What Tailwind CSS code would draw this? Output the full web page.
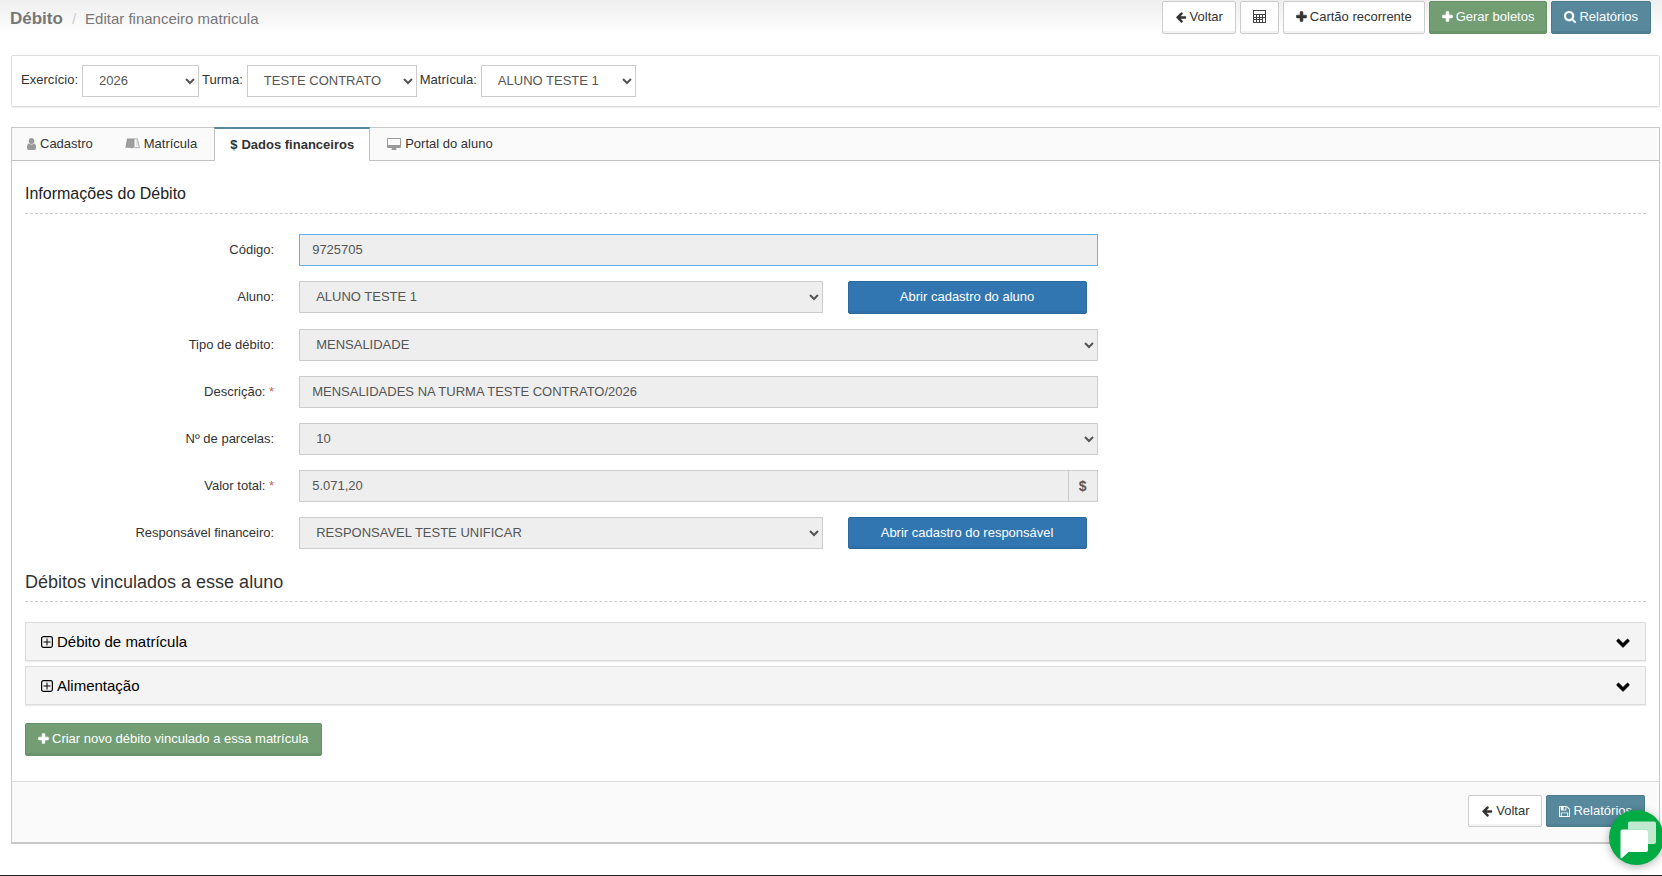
<!DOCTYPE html>
<html lang="pt-BR">
<head>
    <meta charset="UTF-8">
    <meta name="viewport" content="width=device-width, initial-scale=1.0">
    <title>Débito - Editar financeiro matricula</title>
    <script src="https://cdn.jsdelivr.net/npm/@tailwindcss/browser@4"></script>
</head>
<body class="bg-white font-['Liberation_Sans',Arial,sans-serif] text-[13px] leading-5 text-[#333]">

    <!-- Shared icons -->
    <svg class="hidden" xmlns="http://www.w3.org/2000/svg">
        <symbol id="i-left" viewBox="0 0 1792 1792"><path d="M1664 896v128q0 53-32.500 90.500t-84.500 37.500h-704l293 294q38 36 38 90t-38 90l-75 76q-37 37-90 37-52 0-91-37l-651-652q-37-37-37-90 0-52 37-91l651-650q38-38 91-38 52 0 90 38l75 74q38 38 38 91t-38 91l-293 293h704q52 0 84.500 37.500t32.500 90.500z"/></symbol>
        <symbol id="i-plus" viewBox="128 64 1536 1536"><path d="M1600 736v192q0 40-28 68t-68 28h-416v416q0 40-28 68t-68 28h-192q-40 0-68-28t-28-68v-416h-416q-40 0-68-28t-28-68v-192q0-40 28-68t68-28h416v-416q0-40 28-68t68-28h192q40 0 68 28t28 68v416h416q40 0 68 28t28 68z" stroke="currentColor" stroke-width="90"/></symbol>
        <symbol id="i-search" viewBox="64 128 1664 1664"><path d="M1216 832q0-185-131.500-316.500t-316.500-131.500-316.500 131.500-131.500 316.500 131.500 316.500 316.500 131.500 316.500-131.500 131.500-316.500zm512 832q0 52-38 90t-90 38q-54 0-90-38l-343-342q-179 124-399 124-143 0-273.500-55.500t-225-150-150-225-55.500-273.500 55.500-273.500 150-225 225-150 273.500-55.500 273.500 55.500 225 150 150 225 55.500 273.500q0 220-124 399l343 343q37 37 37 90z" stroke="currentColor" stroke-width="50"/></symbol>
        <symbol id="i-save" viewBox="128 128 1536 1536"><path d="M512 1536h768v-384h-768v384zm896 0h128v-896q0-14-10-38.500t-20-34.500l-281-281q-10-10-34-20t-39-10v416q0 40-28 68t-68 28h-576q-40 0-68-28t-28-68v-416h-128v1280h128v-416q0-40 28-68t68-28h832q40 0 68 28t28 68v416zm-384-928v-320q0-13-9.500-22.500t-22.500-9.500h-192q-13 0-22.500 9.500t-9.500 22.500v320q0 13 9.500 22.500t22.500 9.500h192q13 0 22.500-9.500t9.500-22.500zm640 32v928q0 40-28 68t-68 28h-1344q-40 0-68-28t-28-68v-1344q0-40 28-68t68-28h928q40 0 88 20t76 48l280 280q28 28 48 76t20 88z"/></symbol>
        <symbol id="i-down" viewBox="0 0 1792 1792"><path d="M1683 808l-742 741q-19 19-45 19t-45-19l-742-741q-19-19-19-45.500t19-45.500l166-165q19-19 45-19t45 19l531 531 531-531q19-19 45-19t45 19l166 165q19 19 19 45.500t-19 45.500z" stroke="currentColor" stroke-width="110"/></symbol>
        <symbol id="i-plus-square" viewBox="0 0 12 12"><rect x=".6" y=".6" width="10.800" height="10.800" rx="1.800" fill="none" stroke="currentColor" stroke-width="1.200"/><path d="M2.500 5.500h3v-3h1v3h3v1h-3v3h-1v-3h-3z"/></symbol>
    </svg>

    <!-- Page title and actions -->
    <header class="flex items-start justify-between bg-linear-to-b from-[#eee] to-white to-60% pt-px pr-[11px] pl-[10px] h-[55px]">
        <h1 class="flex items-center gap-[9px] text-[15px] leading-9 text-[#777]">
            <span class="text-[17px] font-bold">Débito</span>
            <span class="text-[#ccc]">/</span>
            <span>Editar financeiro matricula</span>
        </h1>
        <div class="flex gap-1">
            <button type="button" class="flex h-[33px] items-center gap-[3px] rounded-xs border border-[#ccc] bg-white px-3 pb-[2px] shadow-[inset_0_-2px_0_rgba(0,0,0,0.05)]">
                <svg class="size-3 fill-current"><use href="#i-left"/></svg>Voltar
            </button>
            <button type="button" aria-label="Calculadora" class="flex h-[33px] items-center rounded-xs border border-[#ccc] bg-white px-3 pb-[2px] shadow-[inset_0_-2px_0_rgba(0,0,0,0.05)]">
                <svg class="h-[13px] w-[13px]" viewBox="0 0 13 13">
                    <path d="M0 0h13v13H0z" fill="#444"/>
                    <path d="M1 1h11v3H1zM1 5h2v2H1zm3 0h2v2H4zm3 0h2v2H7zm3 0h2v2h-2zM1 8h2v1H1zm3 0h2v1H4zm3 0h2v1H7zM1 10h2v2H1zm3 0h2v2H4zm3 0h2v2H7zm3-2h2v4h-2z" fill="#fff"/>
                </svg>
            </button>
            <button type="button" class="flex h-[33px] items-center gap-[3px] rounded-xs border border-[#ccc] bg-white px-3 pb-[2px] shadow-[inset_0_-2px_0_rgba(0,0,0,0.05)]">
                <svg class="size-[11px] fill-current"><use href="#i-plus"/></svg>Cartão recorrente
            </button>
            <button type="button" class="flex h-[33px] items-center gap-[3px] rounded-xs border border-[#659265] bg-[#739e73] px-3 pb-[2px] text-white shadow-[inset_0_-2px_0_rgba(0,0,0,0.05)]">
                <svg class="size-[11px] fill-current"><use href="#i-plus"/></svg>Gerar boletos
            </button>
            <button type="button" class="flex h-[33px] items-center gap-[3px] rounded-xs border border-[#4c7a8d] bg-[#57889c] px-3 pb-[2px] text-white shadow-[inset_0_-2px_0_rgba(0,0,0,0.05)]">
                <svg class="size-3 fill-current"><use href="#i-search"/></svg>Relatórios
            </button>
        </div>
    </header>

    <main class="mr-[2px] ml-[11px]">
        <!-- Filters -->
        <form class="flex items-start gap-1 rounded-xs border border-[#ddd] px-[9px] pt-[9px] pb-[9px] shadow-[0_1px_1px_#ececec]">
            <label for="exercicio" class="leading-[30px]">Exercício:</label>
            <select id="exercicio" class="h-8 w-[117px] border border-[#ccc] bg-white px-3 pb-[2px] text-[#555]"><option>2026</option></select>
            <label for="turma" class="-ml-px leading-[30px]">Turma:</label>
            <select id="turma" class="h-8 w-[170px] border border-[#ccc] bg-white px-3 pb-[2px] text-[#555]"><option>TESTE CONTRATO</option></select>
            <label for="matricula" class="-ml-px leading-[30px]">Matrícula:</label>
            <select id="matricula" class="h-8 w-[155px] border border-[#ccc] bg-white px-3 pb-[2px] text-[#555]"><option>ALUNO TESTE 1</option></select>
        </form>

        <section class="mt-5 border border-b-2 border-[#c8c8c8]">
            <!-- Tabs -->
            <nav class="flex h-[33px] items-stretch border-b border-[#c2c2c2] bg-[#fafafa]">
                <a href="#cadastro" class="flex items-center gap-1 px-[15px] pb-px">
                    <svg class="h-3 w-[9px]" viewBox="0 0 9 12" fill="#999"><path d="M4.500 0C6.200 0 7.300 1.300 7.300 3S6.200 6 4.500 6 1.700 4.700 1.700 3 2.800 0 4.500 0zM1.800 5.600Q4.500 7.400 7.200 5.600 9 6 9 9.500 9 12 7.200 12H1.800Q0 12 0 9.500 0 6 1.800 5.600z"/></svg>
                    Cadastro
                </a>
                <a href="#matricula" class="flex items-center gap-1 px-[17px] pb-px">
                    <svg class="h-[11px] w-[15px]" viewBox="0 0 15 11"><path d="M2 .5h7.500v9.200H8L6.800 10.500 5.500 9.700H.3L.8 8z" fill="#999"/><path d="M9.500.8h2.800L14.500 9.700H10" fill="none" stroke="#aaa"/><path d="M4.300 2 3.500 8.500M6.800 2v6.500" stroke="#bbb" stroke-width=".5"/><path d="M12 2v6.500" stroke="#ccc"/></svg>
                    Matrícula
                </a>
                <a href="#financeiro" class="-mt-px -mb-px flex items-center gap-1 border-x border-t-2 border-x-[#c2c2c2] border-t-[#57889c] bg-white px-[15px] font-bold">
                    <span>$</span>Dados financeiros
                </a>
                <a href="#portal" class="flex items-center gap-1 px-[17px] pb-px">
                    <svg class="h-3 w-[14px]" viewBox="0 0 14 12" fill="#999"><path fill-rule="evenodd" d="M1 0h12q1 0 1 1v8q0 1-1 1H9l.5 1.300V12h-5v-.7L5 10H1q-1 0-1-1V1q0-1 1-1zm0 1v6h12V1z"/></svg>
                    Portal do aluno
                </a>
            </nav>

            <div class="px-[13px] pt-4 pb-[25px]">
                <h2 class="border-b border-dashed border-[#ccc] pb-[2px] text-[16px] leading-[34px] text-[#222]">Informações do Débito</h2>

                <!-- Debt data -->
                <form class="mt-5 flex flex-col gap-[15px]">
                    <div class="grid grid-cols-12 gap-x-6">
                        <label for="codigo" class="col-span-2 pr-px text-right leading-[31px]">Código:</label>
                        <input id="codigo" type="text" value="9725705" readonly class="col-span-6 h-8 border border-[#66afe9] bg-[#eee] px-3 pb-[2px] text-[#555]">
                    </div>
                    <div class="grid grid-cols-12 gap-x-6">
                        <label for="aluno" class="col-span-2 pr-px text-right leading-[31px]">Aluno:</label>
                        <select id="aluno" class="col-span-4 mr-px h-8 border border-[#ccc] bg-[#eee] px-3 pb-[2px] text-[#555]"><option>ALUNO TESTE 1</option></select>
                        <button type="button" class="col-span-2 mr-[11px] h-[33px] rounded-xs border border-[#2c699d] bg-[#3276b1] pb-[2px] text-white shadow-[inset_0_-2px_0_rgba(0,0,0,0.05)]">Abrir cadastro do aluno</button>
                    </div>
                    <div class="grid grid-cols-12 gap-x-6">
                        <label for="tipo" class="col-span-2 pr-px text-right leading-[31px]">Tipo de débito:</label>
                        <select id="tipo" class="col-span-6 h-8 border border-[#ccc] bg-[#eee] px-3 pb-[2px] text-[#555]"><option>MENSALIDADE</option></select>
                    </div>
                    <div class="grid grid-cols-12 gap-x-6">
                        <label for="descricao" class="col-span-2 pr-px text-right leading-[31px]">Descrição: <span class="text-[#c26565]">*</span></label>
                        <input id="descricao" type="text" value="MENSALIDADES NA TURMA TESTE CONTRATO/2026" readonly class="col-span-6 h-8 border border-[#ccc] bg-[#eee] px-3 pb-[2px] text-[#555]">
                    </div>
                    <div class="grid grid-cols-12 gap-x-6">
                        <label for="parcelas" class="col-span-2 pr-px text-right leading-[31px]">Nº de parcelas:</label>
                        <select id="parcelas" class="col-span-6 h-8 border border-[#ccc] bg-[#eee] px-3 pb-[2px] text-[#555]"><option>10</option></select>
                    </div>
                    <div class="grid grid-cols-12 gap-x-6">
                        <label for="valor" class="col-span-2 pr-px text-right leading-[31px]">Valor total: <span class="text-[#c26565]">*</span></label>
                        <div class="col-span-6 flex">
                            <input id="valor" type="text" value="5.071,20" readonly class="h-8 min-w-0 flex-1 border border-[#ccc] bg-[#eee] px-3 pb-[2px] text-[#555]">
                            <span class="flex h-8 w-[29px] items-center justify-center border border-l-0 border-[#ccc] bg-[#eee] text-[14px] font-bold text-[#555]">$</span>
                        </div>
                    </div>
                    <div class="grid grid-cols-12 gap-x-6">
                        <label for="responsavel" class="col-span-2 pr-px text-right leading-[31px]">Responsável financeiro:</label>
                        <select id="responsavel" class="col-span-4 mr-px h-8 border border-[#ccc] bg-[#eee] px-3 pb-[2px] text-[#555]"><option>RESPONSAVEL TESTE UNIFICAR</option></select>
                        <button type="button" class="col-span-2 mr-[11px] h-8 rounded-xs border border-[#2c699d] bg-[#3276b1] text-white shadow-[inset_0_-2px_0_rgba(0,0,0,0.05)]">Abrir cadastro do responsável</button>
                    </div>
                </form>

                <!-- Linked debts -->
                <h2 class="mt-4 border-b border-dashed border-[#ccc] pb-[2px] text-[18px] leading-[34px] text-[#333]">Débitos vinculados a esse aluno</h2>
                <div class="mt-5 flex flex-col gap-[5px] text-[15px] text-black">
                    <button type="button" class="flex h-[39px] items-center gap-1 border border-[#ddd] bg-[#f4f4f4] pr-[15px] pl-[15px] shadow-[0_1px_1px_#ececec]">
                        <svg class="size-3 fill-current"><use href="#i-plus-square"/></svg>
                        <span>Débito de matrícula</span>
                        <svg class="ml-auto size-[14px] fill-current"><use href="#i-down"/></svg>
                    </button>
                    <button type="button" class="flex h-[39px] items-center gap-1 border border-[#ddd] bg-[#f4f4f4] pr-[15px] pl-[15px] shadow-[0_1px_1px_#ececec]">
                        <svg class="size-3 fill-current"><use href="#i-plus-square"/></svg>
                        <span>Alimentação</span>
                        <svg class="ml-auto size-[14px] fill-current"><use href="#i-down"/></svg>
                    </button>
                </div>
                <button type="button" class="mt-[18px] flex h-[33px] items-center gap-[3px] rounded-xs border border-[#659265] bg-[#739e73] px-3 pb-[2px] text-white shadow-[inset_0_-2px_0_rgba(0,0,0,0.05)]">
                    <svg class="size-[11px] fill-current"><use href="#i-plus"/></svg>Criar novo débito vinculado a essa matrícula
                </button>
            </div>

            <!-- Panel footer -->
            <footer class="flex justify-end gap-1 border-t border-[#ddd] bg-[#fafafa] px-[14px] pt-[13px] pb-[15px]">
                <button type="button" class="flex h-8 items-center gap-[3px] rounded-xs border border-[#ccc] bg-white px-3 shadow-[inset_0_-2px_0_rgba(0,0,0,0.05)]">
                    <svg class="size-3 fill-current"><use href="#i-left"/></svg>Voltar
                </button>
                <button type="button" class="flex h-8 items-center gap-[3px] rounded-xs border border-[#4c7a8d] bg-[#57889c] px-3 text-white shadow-[inset_0_-2px_0_rgba(0,0,0,0.05)]">
                    <svg class="size-[11px] fill-current"><use href="#i-save"/></svg>Relatórios
                </button>
            </footer>
        </section>
    </main>

    <div class="mt-[31px] border-b border-[#222]"></div>

    <!-- Chat bubble -->
    <button type="button" aria-label="Chat" class="fixed -right-[2px] bottom-[11px] size-[55px] rounded-full bg-[#00ab44] shadow-[0_2px_8px_rgba(0,0,0,0.3)]">
        <svg class="size-[55px]" viewBox="0 0 55 55" fill="#fff">
            <path opacity=".75" d="M21 11.500h24q2 0 2 2V32q0 2-2 2H39V21.500q0-2-2-2H19v-6q0-2 2-2z"/>
            <path d="M13.500 19.500H37q2 0 2 2V40q0 2-2 2H19.500L13 48q-1.500 1.200-1.500-1V21.500q0-2 2-2z"/>
        </svg>
    </button>

</body>
</html>
